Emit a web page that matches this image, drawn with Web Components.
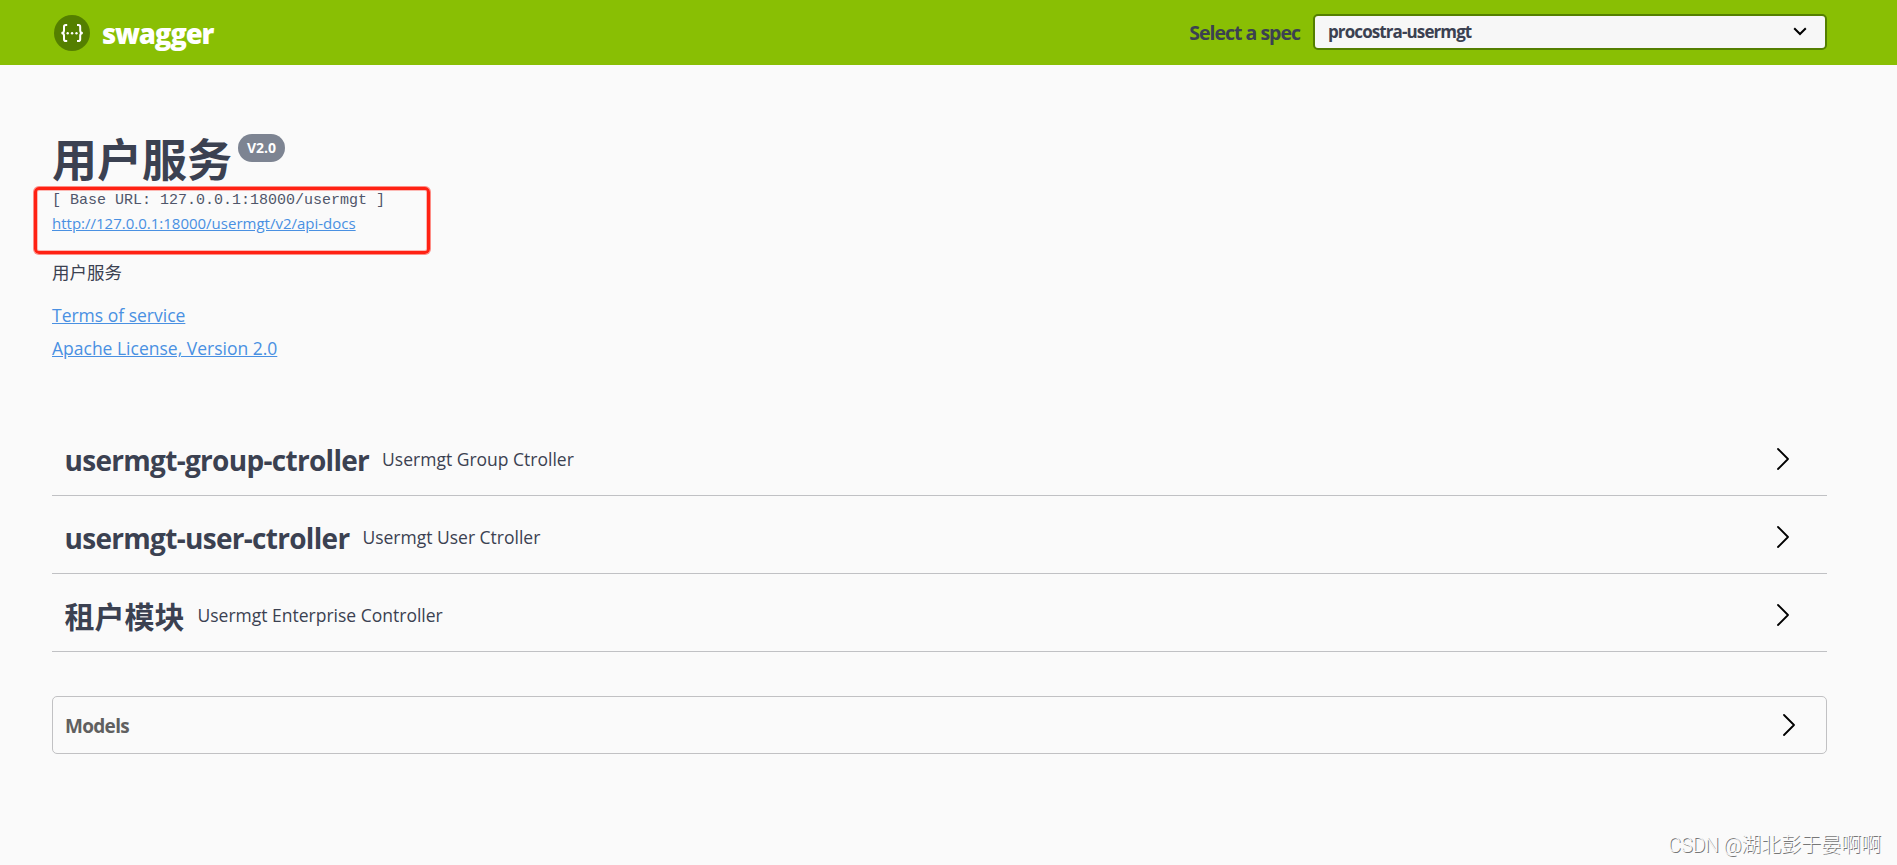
<!DOCTYPE html>
<html lang="zh">
<head>
<meta charset="utf-8">
<title>Swagger UI</title>
<style>
  body {
    margin: 0;
    height: 865px;
    overflow: hidden;
    background: #fafafa;
    color: #3b4151;
    font-family: "Open Sans", "Noto Sans CJK SC", sans-serif;
  }
</style>
</head>
<body>
<swagger-app></swagger-app>

<script>
class topBar extends HTMLElement {
  connectedCallback() {
    this.attachShadow({ mode: 'open' }).innerHTML = `
      <style>
        :host {
          display: flex;
          justify-content: space-between;
          box-sizing: border-box;
          height: 65px;
          padding: 0 70px 0 54px;
          background: #89bf04;
          font-weight: 700;
        }
        .logo {
          display: flex;
          align-items: center;
          gap: 12px;
          color: #fff;
          font-size: 27.5px;
          font-weight: 800;
          letter-spacing: -1.2px;
        }
        .logo svg { display: block; }
        .logo span { padding-top: 1px; }
        .select {
          display: flex;
          align-items: center;
          gap: 13px;
          padding-bottom: 1px;
          font-size: 19.5px;
          letter-spacing: -1px;
        }
        .select > span { padding-top: 1px; }
        .box {
          display: flex;
          align-items: center;
          justify-content: space-between;
          box-sizing: border-box;
          width: 514px;
          height: 36px;
          padding: 0 18px 1px 13px;
          border: 2px solid #547f00;
          border-radius: 5px;
          background: #f7f7f7;
          font-size: 17px;
          letter-spacing: -0.9px;
        }
      </style>
      <div class="logo">
        <svg width="36" height="36" viewBox="0 0 36 36" fill="none">
          <circle cx="18" cy="18" r="18" fill="#547f00"/>
          <g stroke="#fff" stroke-width="2">
            <path d="M13.2 10h-1.4q-1.8 0-1.8 1.8v3.6q0 2.6-2.6 2.6 2.6 0 2.6 2.6v3.6q0 1.8 1.8 1.8h1.4"/>
            <path d="M23 10h1.4q1.8 0 1.8 1.8v3.6q0 2.6 2.6 2.6-2.6 0-2.6 2.6v3.6q0 1.8-1.8 1.8H23"/>
          </g>
          <g fill="#fff"><circle cx="13.7" cy="18.2" r="1.2"/><circle cx="18.1" cy="18.2" r="1.2"/><circle cx="22.5" cy="18.2" r="1.2"/></g>
        </svg>
        <span>swagger</span>
      </div>
      <div class="select">
        <span>Select a spec</span>
        <div class="box">
          <span>procostra-usermgt</span>
          <svg width="14" height="9" viewBox="0 0 14 9" fill="none" stroke="#000" stroke-width="2"><path d="M1.2 1.2 7 7l5.8-5.8"/></svg>
        </div>
      </div>`;
  }
}

class apiInfo extends HTMLElement {
  connectedCallback() {
    this.attachShadow({ mode: 'open' }).innerHTML = `
      <style>
        :host {
          display: block;
          position: relative;
          height: 353px;
          box-sizing: border-box;
          padding-top: 64px;
        }
        .title {
          display: flex;
          align-items: flex-start;
          gap: 6px;
          height: 60px;
        }
        h2 {
          margin: 0;
          font-size: 45px;
          line-height: 62px;
          font-weight: 700;
        }
        .version {
          margin-top: 5px;
          width: 47px;
          height: 28px;
          border-radius: 14px;
          background: #7d8492;
          color: #fff;
          font-size: 14px;
          line-height: 28px;
          font-weight: 700;
          text-align: center;
        }
        pre {
          margin: 0;
          color: #50566a;
          font: 15px/24px "Liberation Mono", monospace;
        }
        a {
          display: block;
          width: max-content;
          color: #4990e2;
          text-decoration: underline;
          font-size: 17.5px;
          line-height: 33px;
        }
        a.docs { font-size: 15px; line-height: 21px; }
        p { margin: 23px 0 12px; font-size: 17.5px; line-height: 30px; }
        /* highlight frame laid over the URLs */
        .frame {
          position: absolute;
          left: -18px;
          top: 122px;
          width: 396px;
          height: 67px;
          box-sizing: border-box;
          border: 3px solid #ff2113;
          border-radius: 5px;
          box-shadow: 0 0 0 1px rgba(255, 33, 19, 0.5), inset 0 0 0 1px rgba(255, 33, 19, 0.3);
        }
      </style>
      <div class="title"><h2>用户服务</h2><span class="version">V2.0</span></div>
      <pre>[ Base URL: 127.0.0.1:18000/usermgt ]</pre>
      <a class="docs">http://127.0.0.1:18000/usermgt/v2/api-docs</a>
      <p>用户服务</p>
      <a>Terms of service</a>
      <a>Apache License, Version 2.0</a>
      <div class="frame"></div>`;
  }
}

class tagRow extends HTMLElement {
  connectedCallback() {
    this.attachShadow({ mode: 'open' }).innerHTML = `
      <style>
        :host {
          display: flex;
          align-items: center;
          box-sizing: border-box;
          height: 78px;
          padding: 4px 38px 0 12.5px;
          border-bottom: 1px solid #c0c1c4;
        }
        h4 {
          margin: 3px 13px 0 0;
          font-size: var(--tag-size, 30px);
          line-height: 41px;
          letter-spacing: var(--tracking, 0);
        }
        small { flex: 1; padding-top: 1px; font-size: 17.5px; }
      </style>
      <h4><slot></slot></h4>
      <small>${this.getAttribute('description')}</small>
      <arrow-icon></arrow-icon>`;
  }
}

class arrowIcon extends HTMLElement {
  connectedCallback() {
    this.attachShadow({ mode: 'open' }).innerHTML = `
      <style>
        :host { display: block; }
        svg { display: block; }
      </style>
      <svg width="12" height="22" viewBox="0 0 12 22" fill="none" stroke="#000" stroke-width="1.8" stroke-linecap="round" stroke-linejoin="round"><path d="M1 1l10 10L1 21"/></svg>`;
  }
}

class modelsBox extends HTMLElement {
  connectedCallback() {
    this.attachShadow({ mode: 'open' }).innerHTML = `
      <style>
        :host {
          display: flex;
          align-items: center;
          justify-content: space-between;
          box-sizing: border-box;
          height: 58px;
          margin-top: 44px;
          padding: 0 31px 0 12px;
          border: 1px solid #c1c1c3;
          border-radius: 5px;
          color: #606060;
          font-size: 19px;
          font-weight: 700;
          letter-spacing: -0.7px;
        }
        span { padding-top: 2px; }
      </style>
      <span><slot></slot></span>
      <arrow-icon></arrow-icon>`;
  }
}

class swaggerApp extends HTMLElement {
  connectedCallback() {
    this.attachShadow({ mode: 'open' }).innerHTML = `
      <style>
        :host { display: block; position: relative; height: 865px; }
        main { padding: 0 70px 0 52px; }
        .latin { --tag-size: 28px; --tracking: -0.7px; }
        .watermark {
          position: absolute;
          right: 16px;
          bottom: 5px;
          color: #fafafa;
          font: 300 20px/29px Roboto, "Noto Sans CJK SC", sans-serif;
          text-shadow: 1px 1px 0 #777;
          white-space: nowrap;
        }
        .watermark span { letter-spacing: -0.4px; }
      </style>
      <top-bar></top-bar>
      <main>
        <api-info></api-info>
        <tag-row class="latin" description="Usermgt Group Ctroller">usermgt-group-ctroller</tag-row>
        <tag-row class="latin" description="Usermgt User Ctroller">usermgt-user-ctroller</tag-row>
        <tag-row description="Usermgt Enterprise Controller">租户模块</tag-row>
        <models-box>Models</models-box>
      </main>
      <div class="watermark"><span>CSDN @</span>湖北彭于晏啊啊</div>`;
  }
}

customElements.define('top-bar', topBar);
customElements.define('api-info', apiInfo);
customElements.define('arrow-icon', arrowIcon);
customElements.define('tag-row', tagRow);
customElements.define('models-box', modelsBox);
customElements.define('swagger-app', swaggerApp);
</script>
</body>
</html>
